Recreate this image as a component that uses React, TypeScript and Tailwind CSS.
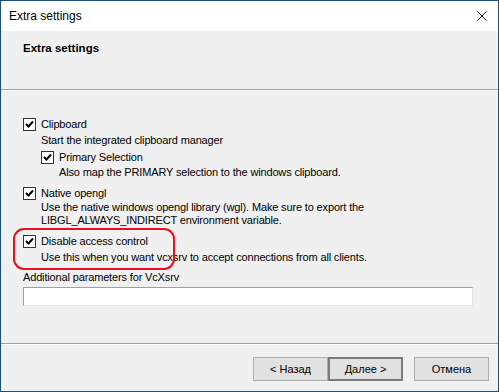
import React from "react";

const font = { fontFamily: '"Liberation Sans", Arial, sans-serif' };

function Check({ className = "" }: { className?: string }) {
  return (
    <div className={"w-[13px] h-[13px] border border-[#333333] bg-white flex items-center justify-center shrink-0 " + className}>
      <svg width="9" height="9" viewBox="0 0 9 9">
        <path d="M1 4 L3.5 6.5 L8 1.5" stroke="#000" strokeWidth="2" fill="none" />
      </svg>
    </div>
  );
}

function Btn({ label, def = false }: { label: string; def?: boolean }) {
  return (
    <div
      className={
        "w-[75px] h-[24px] flex items-center justify-center text-[11px] text-black bg-[#e1e1e1] " +
        (def ? "border-2 border-[#7a7a7a]" : "border border-[#adadad]")
      }
    >
      {label}
    </div>
  );
}

export default function App() {
  return (
    <div
      className="w-[499px] h-[392px] border border-[#1d4d7a] bg-[#f0f0f0] flex flex-col overflow-hidden text-black"
      style={font}
    >
      {/* title bar */}
      <div className="h-[30px] bg-white flex items-center justify-between pl-[8px] pr-[10px] shrink-0">
        <span className="text-[12px]">Extra settings</span>
        <svg width="10" height="10" viewBox="0 0 10 10" className="mr-[1px]">
          <path d="M0.5 0.5 L9.5 9.5 M9.5 0.5 L0.5 9.5" stroke="#111" strokeWidth="1" />
        </svg>
      </div>
      {/* header */}
      <div className="h-[58px] shrink-0 pl-[22px] pt-[10px]">
        <div className="text-[11.5px] font-bold leading-[14px]">Extra settings</div>
      </div>
      <div className="h-px bg-[#a0a0a0] shrink-0" />
      <div className="h-px bg-white shrink-0" />
      {/* content */}
      <div className="flex-1 pl-[22px] pr-[26px] pt-[26px] text-[11px] leading-[14px] tracking-[-0.15px] relative">
        <div className="flex items-center h-[14px] gap-[5px]">
          <Check />
          <span>Clipboard</span>
        </div>
        <div className="pl-[18px] mt-[2px]">Start the integrated clipboard manager</div>
        <div className="pl-[18px] mt-[3px] flex items-center h-[14px] gap-[5px]">
          <Check />
          <span>Primary Selection</span>
        </div>
        <div className="pl-[36px] mt-[1px]">Also map the PRIMARY selection to the windows clipboard.</div>
        <div className="flex items-center h-[14px] gap-[5px] mt-[7px]">
          <Check />
          <span>Native opengl</span>
        </div>
        <div className="pl-[18px] mt-[1px] leading-[13px] w-[370px]">
          Use the native windows opengl library (wgl). Make sure to export the LIBGL_ALWAYS_INDIRECT environment variable.
        </div>
        <div className="flex items-center h-[14px] gap-[5px] mt-[7px]">
          <Check />
          <span>Disable access control</span>
        </div>
        <div className="pl-[18px] mt-[2px]">Use this when you want vcxsrv to accept connections from all clients.</div>
        <div className="mt-[6px]">Additional parameters for VcXsrv</div>
        <div className="mt-[3px] h-[19px] w-[450px] bg-white border border-[#a0a0a0] border-r-[#e3e3e3] border-b-[#e3e3e3]" />
        {/* red highlight */}
        <div className="absolute left-[12px] top-[137px] w-[162px] h-[42px] border-2 border-[#e8101c] rounded-[11px]" />
      </div>
      {/* bottom */}
      <div className="h-px bg-[#a0a0a0] shrink-0" />
      <div className="h-px bg-white shrink-0" />
      <div className="h-[46px] shrink-0 flex items-start pt-[12px] pl-[252px]">
        <Btn label="< Назад" />
        <Btn label="Далее >" def />
        <div className="w-[11px]" />
        <Btn label="Отмена" />
      </div>
    </div>
  );
}
